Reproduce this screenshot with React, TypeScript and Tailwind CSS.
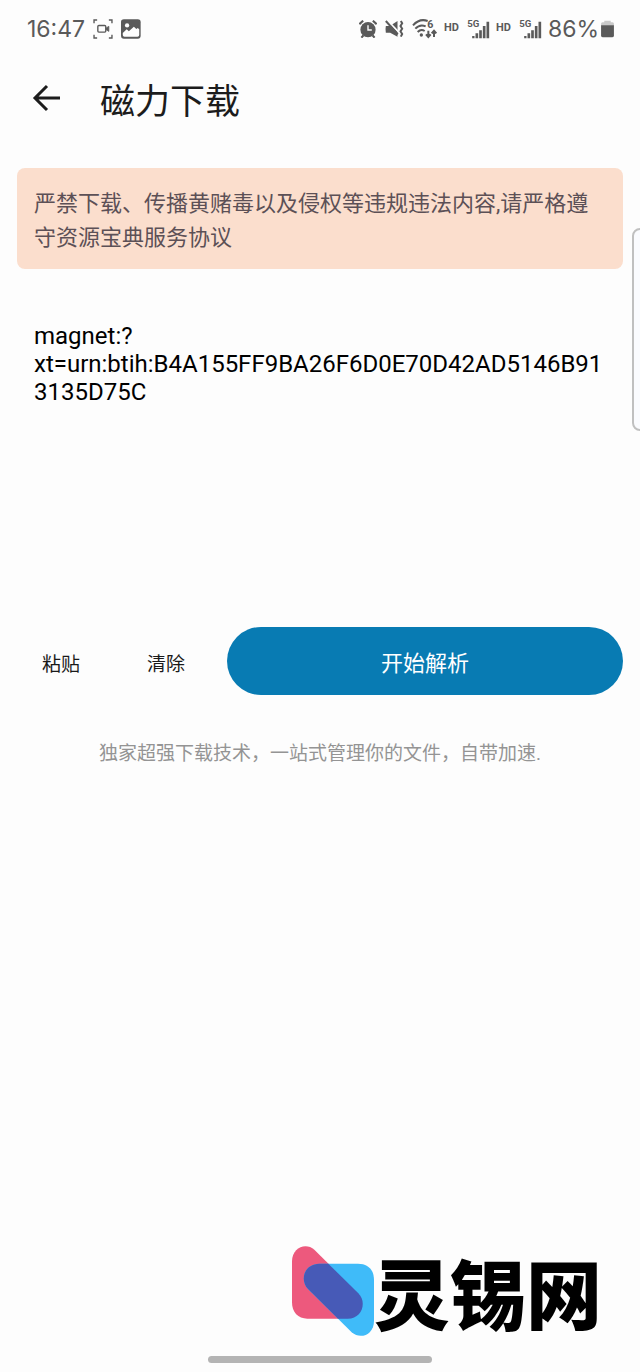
import React, { useState } from 'react';

const CaptureIcon = () => (
    <svg viewBox="0 0 58 58" className="w-5 h-5" fill="none" stroke="currentColor" strokeWidth="4">
        <path d="M3 12V3h9M46 3h9v9M55 46v9h-9M12 55H3v-9" />
        <rect x="14" y="19" width="23" height="19" rx="3" />
        <path d="M38 26l8-5v15l-8-5z" fill="currentColor" strokeWidth="2" />
    </svg>
);

const PictureIcon = () => (
    <svg viewBox="0 0 56 56" className="w-5 h-5">
        <rect y="1" width="55" height="54" rx="8" fill="currentColor" />
        <circle cx="17" cy="18" r="6" fill="#fdfdfd" />
        <path d="M5 39l11-10 6 5 14-12 7 6 4-3 4 4v16q0 5-5 5H10q-5 0-5-5z" fill="#fdfdfd" />
    </svg>
);

const AlarmIcon = () => (
    <svg viewBox="0 0 52 52" className="w-[18px] h-[18px]">
        <path d="M1 12L12 2M51 12L40 2M13 44l-6 7M39 44l6 7" stroke="currentColor" strokeWidth="6" />
        <circle cx="26" cy="28" r="22" fill="currentColor" />
        <path d="M26 15v14h11" fill="none" stroke="#fdfdfd" strokeWidth="4" />
    </svg>
);

const MuteIcon = () => (
    <svg viewBox="0 0 56 54" className="w-[19px] h-[18px]">
        <path d="M2 18h12L37 3v47L15 38H2q-2-10 0-20z" fill="currentColor" />
        <path d="M7 1l32 34" stroke="#fdfdfd" strokeWidth="5" />
        <path d="M2 3l36 40" stroke="currentColor" strokeWidth="6" />
        <path d="M47 3l4 7-5 8 5 8-5 8 5 8-4 8" fill="none" stroke="currentColor" strokeWidth="6" />
    </svg>
);

const WifiIcon = () => (
    <svg viewBox="0 0 78 60" className="w-[26px] h-5" fill="none" stroke="currentColor" strokeWidth="6">
        <path d="M3 19Q23-3 47 6M10 29Q24 14 41 22M17 39Q27 29 38 36" />
        <circle cx="28" cy="48" r="5" fill="currentColor" stroke="none" />
        <path d="M49 35v18M42 46l7 8 7-8M66 54V36M59 43l7-8 7 8" />
        <text x="46" y="26" className="text-[32px] font-bold" fill="currentColor" stroke="none">6</text>
    </svg>
);

const SignalIcon = () => (
    <svg viewBox="0 0 68 60" className="w-[23px] h-5" fill="currentColor">
        <text x="0" y="23" className="text-[29px] font-bold">5G</text>
        <path d="M15 51h7v7h-7zM25 43h8v15h-8zM36 34h8v24h-8zM47 21h8v37h-8zM58 8h8v50h-8z" />
    </svg>
);

const BatteryIcon = () => (
    <svg viewBox="0 0 40 56" className="w-[13px] h-[18px]">
        <path d="M10 2h20v5h6q4 0 4 5v6H0v-6q0-5 4-5h6z" fill="#c9c9c9" />
        <path d="M0 16h40v32q0 6-6 6H6q-6 0-6-6z" fill="currentColor" />
    </svg>
);

const StatusBar = () => (
    <div className="flex items-center justify-between h-[57px] pl-[27px] pr-[26px] text-[#5a5a5a]">
        <div className="flex items-center gap-2">
            <span className="font-[Inter,sans-serif] text-[23px] leading-7">16:47</span>
            <CaptureIcon />
            <PictureIcon />
        </div>
        <div className="flex items-center gap-1.5">
            <div className="flex items-center gap-2">
                <AlarmIcon />
                <MuteIcon />
                <WifiIcon />
            </div>
            <div className="flex items-center gap-2 text-[11px] font-bold">
                <span>HD</span>
                <SignalIcon />
            </div>
            <div className="flex items-center gap-2 text-[11px] font-bold">
                <span>HD</span>
                <SignalIcon />
            </div>
            <div className="flex items-center gap-0.5">
                <span className="font-[Inter,sans-serif] text-[23px] leading-7">86%</span>
                <BatteryIcon />
            </div>
        </div>
    </div>
);

const LogoMark = () => (
    <svg viewBox="66 47 246 268" className="w-[82px] h-[90px]">
        <path d="M66 92C66 50 108 34 133 57L265 188C292 215 276 264 233 264H112C84 264 66 245 66 215Z" fill="#ed597d" />
        <path d="M148 99H264C295 99 312 118 312 148V270C312 312 272 328 245 305L114 175C88 148 103 99 148 99Z" fill="#3fbbf9" />
        <path d="M148 99H175L265 188C292 215 276 264 233 264H204L114 175C88 148 103 99 148 99Z" fill="#475ab7" />
    </svg>
);

const App: React.FC = () => {
    const [link, setLink] = useState('magnet:?xt=urn:btih:B4A155FF9BA26F6D0E70D42AD5146B913135D75C');

    const handlePaste = async () => {
        const text = await navigator.clipboard.readText();
        setLink(text);
    };

    return (
        <div className="relative min-h-screen flex flex-col overflow-hidden bg-[#fdfdfd] font-[Roboto,'Noto_Sans_CJK_SC',sans-serif]">
            <StatusBar />

            {/* Header */}
            <header className="flex items-start gap-10 h-[87px] px-8 pt-5">
                <button aria-label="返回" className="py-[7px] text-[#1c1c1c]">
                    <svg viewBox="0 0 28 28" className="w-7 h-7" fill="none" stroke="currentColor" strokeWidth="3">
                        <path d="M28 14H3M15 2L3 14l12 12" />
                    </svg>
                </button>
                <h1 className="text-[35px] leading-[52px] text-[#1c1c1c]">磁力下载</h1>
            </header>

            <main className="flex flex-col px-[17px] pt-6">
                <p className="rounded-lg bg-[#fbdecd] px-[17px] pt-[19px] pb-[14px] text-[22px] leading-[34px] text-[#5c5056]">
                    严禁下载、传播黄赌毒以及侵权等违规违法内容,请严格遵守资源宝典服务协议
                </p>

                <textarea
                    aria-label="磁力链接"
                    value={link}
                    onChange={e => setLink(e.target.value)}
                    className="mt-9 h-[322px] resize-none bg-transparent px-[17px] py-[17px] text-2xl leading-7 text-black break-words outline-none"
                />

                {/* Actions */}
                <div className="flex items-stretch gap-[17px] h-[68px]">
                    <button onClick={handlePaste} className="w-[88px] pt-2 text-[19px] text-[#1a1a1a]">粘贴</button>
                    <button onClick={() => setLink('')} className="w-[88px] pt-2 text-[19px] text-[#1a1a1a]">清除</button>
                    <button className="flex-1 rounded-full bg-[#087bb3] pt-1 text-[22px] text-white">开始解析</button>
                </div>

                <p className="mt-[45px] text-center text-[19px] leading-7 text-[#949494]">
                    独家超强下载技术，一站式管理你的文件，自带加速.
                </p>
            </main>

            {/* Edge panel handle */}
            <div className="absolute top-[228px] -right-2 w-4 h-[203px] rounded-lg border-2 border-[#c0c0c0] bg-[#fafbfe]" />

            <footer className="mt-auto flex flex-col">
                <div className="flex items-center justify-end pr-[38px]">
                    <LogoMark />
                    <span className="font-['Noto_Sans_CJK_SC',sans-serif] text-[76px] leading-[90px] font-black text-black">灵锡网</span>
                </div>
                <div className="mx-auto mt-5 mb-[9px] h-[7px] w-[35%] rounded-full bg-[#b4b4b4]" />
            </footer>
        </div>
    );
};

export default App;
